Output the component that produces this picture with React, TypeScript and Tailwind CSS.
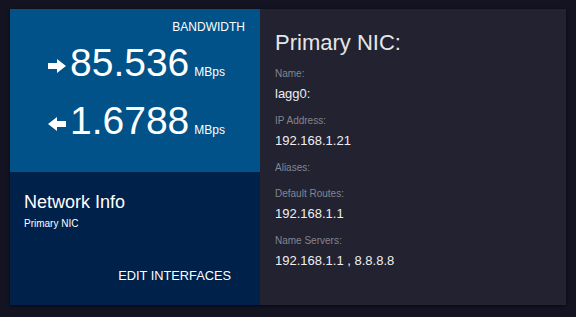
import React from 'react';

const font = { fontFamily: '"Liberation Sans", Arial, sans-serif' };

function ArrowRight() {
  return (
    <svg viewBox="0 0 18 14" width="18" height="14" className="block shrink-0">
      <path d="M0 4H9V0L18 7L9 14V10H0Z" fill="#ffffff" />
    </svg>
  );
}

function ArrowLeft() {
  return (
    <svg viewBox="0 0 18 14" width="18" height="14" className="block shrink-0">
      <path d="M18 4H9V0L0 7L9 14V10H18Z" fill="#ffffff" />
    </svg>
  );
}

const fields = [
  { label: 'Name:', value: 'lagg0:' },
  { label: 'IP Address:', value: '192.168.1.21' },
  { label: 'Aliases:', value: '' },
  { label: 'Default Routes:', value: '192.168.1.1' },
  { label: 'Name Servers:', value: '192.168.1.1 , 8.8.8.8' },
];

function Rate({ value, dir }: { value: string; dir: 'in' | 'out' }) {
  return (
    <div className="flex items-end pl-[38px] h-[39px]">
      <span className="mb-[9px] mr-[4px] flex">{dir === 'out' ? <ArrowRight /> : <ArrowLeft />}</span>
      <span className="text-[39px] leading-[39px]">{value}</span>
      <span className="text-[12px] leading-[12px] ml-[5px] mb-[4px]">MBps</span>
    </div>
  );
}

export default function App() {
  return (
    <div className="w-[576px] h-[317px] bg-[#141322] pt-[9px] pl-[10px]" style={font}>
      <div className="flex w-[556px] h-[296px] shadow-[0_1px_3px_rgba(0,0,0,0.6)]">
        <div className="w-[250px] flex flex-col">
          <div className="h-[163px] bg-[#005288] text-white pt-[11px] pr-[15px]">
            <div className="text-right text-[12px] leading-[14px]">BANDWIDTH</div>
            <div className="mt-[9px]">
              <Rate value="85.536" dir="out" />
            </div>
            <div className="mt-[19px]">
              <Rate value="1.6788" dir="in" />
            </div>
          </div>
          <div className="flex-1 bg-[#00214a] text-white px-[14px] pt-[19px] flex flex-col">
            <div className="text-[18px] leading-[22px]">Network Info</div>
            <div className="text-[10px] leading-[12px] mt-[5px]">Primary NIC</div>
            <div className="text-right text-[12.8px] leading-[15px] mt-[38px] pr-[15px]">EDIT INTERFACES</div>
          </div>
        </div>
        <div className="flex-1 bg-[#222230] pl-[15px] pt-[21px]">
          <div className="text-[22px] leading-[26px] text-[#e6e6ea]">Primary NIC:</div>
          <div className="mt-[12px] flex flex-col">
            {fields.map((f) => (
              <div key={f.label} className={f.value ? 'mb-[13px]' : 'mb-[14px]'}>
                <div className="text-[10px] leading-[12px] text-[#85858f]">{f.label}</div>
                {f.value && (
                  <div className="text-[13px] leading-[16px] text-[#eeeef0] mt-[6px]">{f.value}</div>
                )}
              </div>
            ))}
          </div>
        </div>
      </div>
    </div>
  );
}
